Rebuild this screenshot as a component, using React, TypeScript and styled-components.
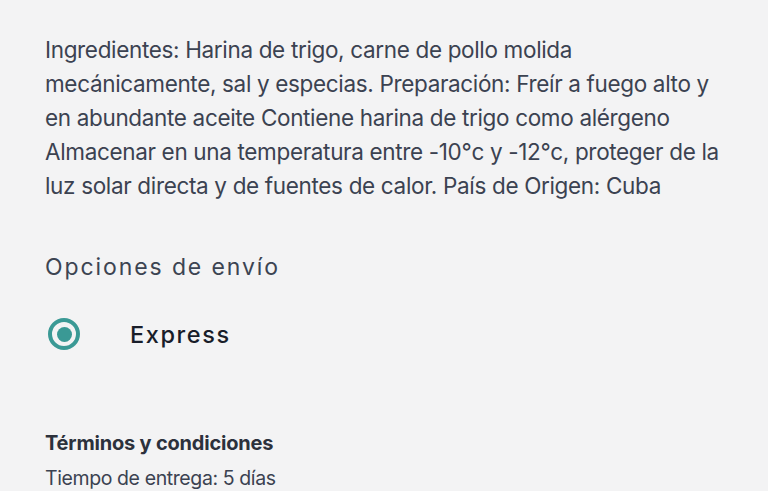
import React from "react";
import styled, { createGlobalStyle } from "styled-components";

const GlobalStyle = createGlobalStyle`
  html, body {
    margin: 0;
    padding: 0;
    background: #f3f3f4;
  }
  body {
    font-family: Inter, "Noto Sans", sans-serif;
    -webkit-font-smoothing: antialiased;
  }
`;

const description =
  "Ingredientes: Harina de trigo, carne de pollo molida mecánicamente, sal y especias. Preparación: Freír a fuego alto y en abundante aceite Contiene harina de trigo como alérgeno Almacenar en una temperatura entre -10°c y -12°c, proteger de la luz solar directa y de fuentes de calor. País de Origen: Cuba";

const shippingOptions = [{ id: "express", label: "Express", selected: true }];

export default function App() {
  return (
    <>
      <GlobalStyle />
      <Page>
        <Description>{description}</Description>

        <Section>
          <SectionTitle>Opciones de envío</SectionTitle>
          <OptionList>
            {shippingOptions.map((option) => (
              <OptionRow key={option.id}>
                <Radio selected={option.selected} />
                <OptionLabel>{option.label}</OptionLabel>
              </OptionRow>
            ))}
          </OptionList>
        </Section>

        <Terms>
          <TermsTitle>Términos y condiciones</TermsTitle>
          <TermsText>Tiempo de entrega: 5 días</TermsText>
        </Terms>
      </Page>
    </>
  );
}

const Page = styled.div`
  display: flex;
  flex-direction: column;
  padding: 33px 38px 0 45px;
  height: 491px;
  box-sizing: border-box;
  overflow: hidden;
`;

const Description = styled.p`
  margin: 0;
  font-size: 22.5px;
  line-height: 34px;
  letter-spacing: -0.34px;
  color: #3b4251;
`;

const Section = styled.div`
  display: flex;
  flex-direction: column;
  margin-top: 49px;
`;

const SectionTitle = styled.h3`
  margin: 0;
  font-size: 23px;
  font-weight: 400;
  line-height: 30px;
  letter-spacing: 1.9px;
  color: #3c4452;
`;

const OptionList = styled.div`
  display: flex;
  flex-direction: column;
  margin-top: 35px;
`;

const OptionRow = styled.label`
  display: flex;
  align-items: center;
  gap: 50px;
  height: 34px;
`;

type RadioProps = { selected?: boolean };

const Radio = styled.span<RadioProps>`
  width: 32px;
  height: 32px;
  margin-left: 3px;
  border-radius: 50%;
  border: 4.5px solid #3a9995;
  box-sizing: border-box;
  display: flex;
  align-items: center;
  justify-content: center;
  &::after {
    content: "";
    width: 15px;
    height: 15px;
    border-radius: 50%;
    background: ${({ selected }) => (selected ? "#3a9995" : "transparent")};
  }
`;

const OptionLabel = styled.span`
  font-size: 23.5px;
  font-weight: 500;
  letter-spacing: 1.6px;
  color: #181d29;
`;

const Terms = styled.div`
  display: flex;
  flex-direction: column;
  margin-top: 80px;
  gap: 11px;
`;

const TermsTitle = styled.h4`
  margin: 0;
  font-size: 20px;
  font-weight: 700;
  line-height: 24px;
  letter-spacing: -0.2px;
  color: #2c313c;
`;

const TermsText = styled.p`
  margin: 0;
  font-size: 19.5px;
  line-height: 24px;
  letter-spacing: -0.4px;
  color: #3b4251;
`;
